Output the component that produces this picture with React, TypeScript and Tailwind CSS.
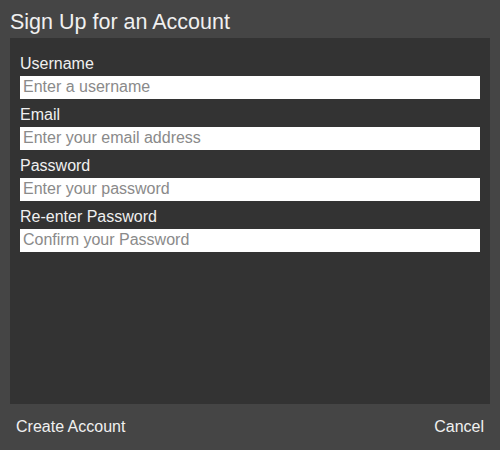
import React from "react";

const fields = [
  { label: "Username", placeholder: "Enter a username", type: "text" },
  { label: "Email", placeholder: "Enter your email address", type: "email" },
  { label: "Password", placeholder: "Enter your password", type: "password" },
  { label: "Re-enter Password", placeholder: "Confirm your Password", type: "password" },
];

export default function App() {
  return (
    <div
      className="w-[500px] h-[450px] bg-[#454545] flex flex-col text-[#f0f0f0]"
      style={{ fontFamily: '"Liberation Sans", Arial, sans-serif' }}
    >
      <div className="h-[38px] px-[10px] pt-[12px] text-[21.5px] leading-[21.5px]">
        Sign Up for an Account
      </div>
      <div className="mx-[10px] flex-1 bg-[#333333] px-[10px] pt-[17px] flex flex-col gap-[7px]">
        {fields.map((f) => (
          <div key={f.label} className="flex flex-col">
            <label className="text-[16px] leading-[18px] h-[21px]">{f.label}</label>
            <input
              type={f.type}
              placeholder={f.placeholder}
              className="h-[23px] w-full bg-white px-[3px] pt-0 pb-[2px] text-[16px] leading-[21px] text-black placeholder:text-[#8a8a8a] outline-none"
              style={{ fontFamily: '"Liberation Sans", Arial, sans-serif' }}
            />
          </div>
        ))}
      </div>
      <div className="h-[46px] px-[16px] flex items-center justify-between text-[16px]">
        <button className="text-[#f0f0f0]">Create Account</button>
        <button className="text-[#f0f0f0]">Cancel</button>
      </div>
    </div>
  );
}
